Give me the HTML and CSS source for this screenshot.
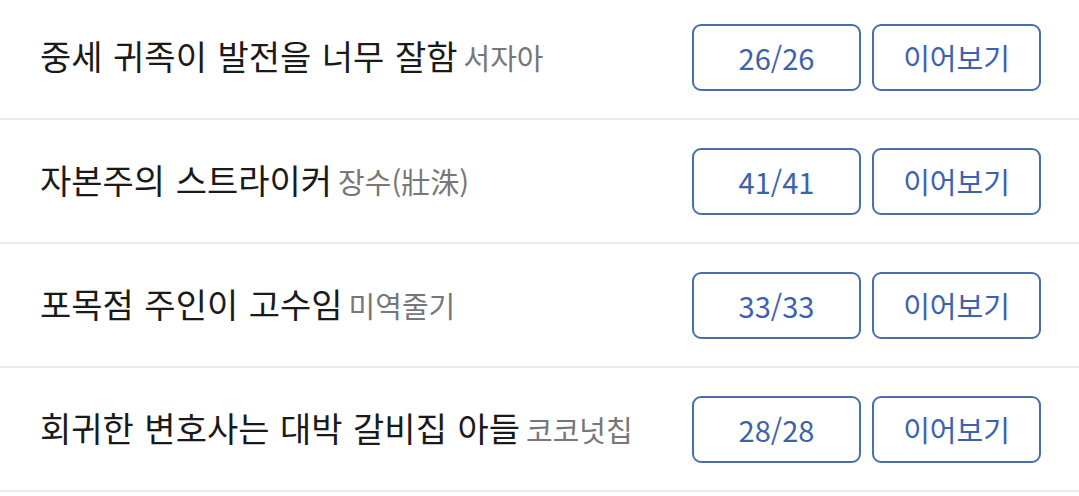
FILE: index.html
```html
<!DOCTYPE html>
<html lang="ko">
<head>
<meta charset="utf-8">
<link rel="stylesheet" href="styles.css">
</head>
<body>
<ul class="list">
  <li class="row">
    <div class="info"><span class="title">중세 귀족이 발전을 너무 잘함</span><span class="author">서자아</span></div>
    <div class="actions"><button class="btn">26/26</button><button class="btn">이어보기</button></div>
  </li>
  <li class="row">
    <div class="info"><span class="title">자본주의 스트라이커</span><span class="author">장수(壯洙)</span></div>
    <div class="actions"><button class="btn">41/41</button><button class="btn">이어보기</button></div>
  </li>
  <li class="row">
    <div class="info"><span class="title">포목점 주인이 고수임</span><span class="author">미역줄기</span></div>
    <div class="actions"><button class="btn">33/33</button><button class="btn">이어보기</button></div>
  </li>
  <li class="row">
    <div class="info"><span class="title">회귀한 변호사는 대박 갈비집 아들</span><span class="author">코코넛칩</span></div>
    <div class="actions"><button class="btn">28/28</button><button class="btn">이어보기</button></div>
  </li>
</ul>
</body>
</html>
```
FILE: styles.css
```css
html, body {
  margin: 0;
  padding: 0;
  background: #fff;
}
body {
  font-family: "Noto Sans CJK KR", "Noto Sans", sans-serif;
  color: #1a1a1a;
}
.list {
  list-style: none;
  margin: -4px 0 0 0;
  padding: 0;
}
.row {
  display: flex;
  align-items: center;
  justify-content: space-between;
  height: 122px;
  padding: 0 38px 0 40px;
  border-bottom: 2px solid #ebebeb;
}
.info {
  display: flex;
  align-items: baseline;
  gap: 6px;
  margin-top: -4px;
}
.title {
  font-size: 34px;
  word-spacing: 1px;
  color: #1a1a1a;
}
.author {
  font-size: 29px;
  color: #777;
}
.actions {
  display: flex;
  gap: 11px;
}
.btn {
  width: 169px;
  height: 67px;
  border: 2px solid #4a6ead;
  border-radius: 9px;
  background: #fff;
  color: #3d62ad;
  font-family: "Noto Sans CJK KR", "Noto Sans", sans-serif;
  font-size: 29px;
  padding: 0;
}
```
